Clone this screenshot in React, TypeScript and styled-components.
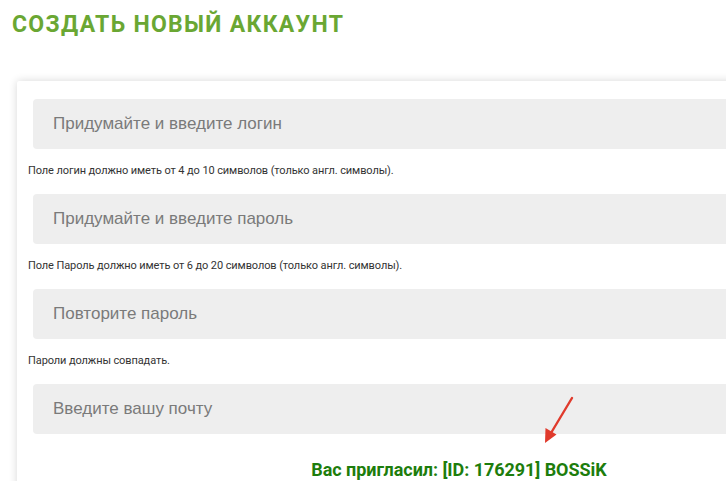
import styled, { createGlobalStyle } from "styled-components";

const GlobalStyle = createGlobalStyle`
  html, body {
    margin: 0;
    padding: 0;
    background: #fff;
    overflow: hidden;
  }
  body {
    font-family: Roboto, "Liberation Sans", Arial, sans-serif;
  }
`;

const fields = [
  {
    placeholder: "Придумайте и введите логин",
    type: "text",
    help: "Поле логин должно иметь от 4 до 10 символов (только англ. символы).",
  },
  {
    placeholder: "Придумайте и введите пароль",
    type: "password",
    help: "Поле Пароль должно иметь от 6 до 20 символов (только англ. символы).",
  },
  {
    placeholder: "Повторите пароль",
    type: "password",
    help: "Пароли должны совпадать.",
  },
  { placeholder: "Введите вашу почту", type: "email", help: "" },
];

const App = () => {
  return (
    <>
      <GlobalStyle />
      <Page>
        <Title>Создать новый аккаунт</Title>
        <Card>
          {fields.map((f) => (
            <Field key={f.placeholder}>
              <Input type={f.type} placeholder={f.placeholder} />
              {f.help && <Help>{f.help}</Help>}
            </Field>
          ))}
          <Invite>
            Вас пригласил: [ID: 176291] BOSSiK
            {/* красная стрелка-пометка */}
            <Arrow width="40" height="52" viewBox="0 0 40 52">
              <line
                x1="35"
                y1="2"
                x2="14"
                y2="37"
                stroke="#e03a2c"
                strokeWidth="2.4"
                strokeLinecap="round"
              />
              <polygon points="8,47 8.5,32 19.5,38.5" fill="#e03a2c" />
            </Arrow>
          </Invite>
        </Card>
      </Page>
    </>
  );
};

const Page = styled.div`
  padding: 12px 0 0 12px;
  height: 481px;
  box-sizing: border-box;
`;

const Title = styled.h1`
  margin: 0;
  font-family: Roboto, "Liberation Sans", sans-serif;
  font-size: 23px;
  line-height: 26px;
  font-weight: 700;
  letter-spacing: 1.3px;
  text-transform: uppercase;
  color: #6aa733;
`;

const Card = styled.div`
  position: relative;
  margin: 43px 0 0 5px;
  width: 873px;
  padding: 18px 0 0 11px;
  box-sizing: border-box;
  background: #fff;
  box-shadow: 0 0 8px rgba(0, 0, 0, 0.16);
  border-radius: 2px;
`;

const Field = styled.div`
  display: flex;
  flex-direction: column;
`;

const Input = styled.input`
  margin-left: 5px;
  height: 50px;
  padding: 0 20px;
  border: none;
  border-radius: 4px;
  background: #eeeeee;
  font-family: "Liberation Sans", Arial, sans-serif;
  font-size: 17px;
  color: #555;
  outline: none;
  &::placeholder {
    color: #7a7a7a;
  }
`;

const Help = styled.p`
  margin: 15px 0 16px;
  font-size: 11px;
  line-height: 14px;
  letter-spacing: -0.1px;
  color: #333;
`;

const Invite = styled.p`
  position: relative;
  margin: 24px 0 0;
  padding-bottom: 20px;
  text-align: center;
  font-family: Roboto, "Liberation Sans", sans-serif;
  font-size: 18px;
  line-height: 24px;
  font-weight: 700;
  letter-spacing: -0.05px;
  color: #1d7d0c;
`;

const Arrow = styled.svg`
  position: absolute;
  left: 509px;
  top: -62px;
`;

export default App;
